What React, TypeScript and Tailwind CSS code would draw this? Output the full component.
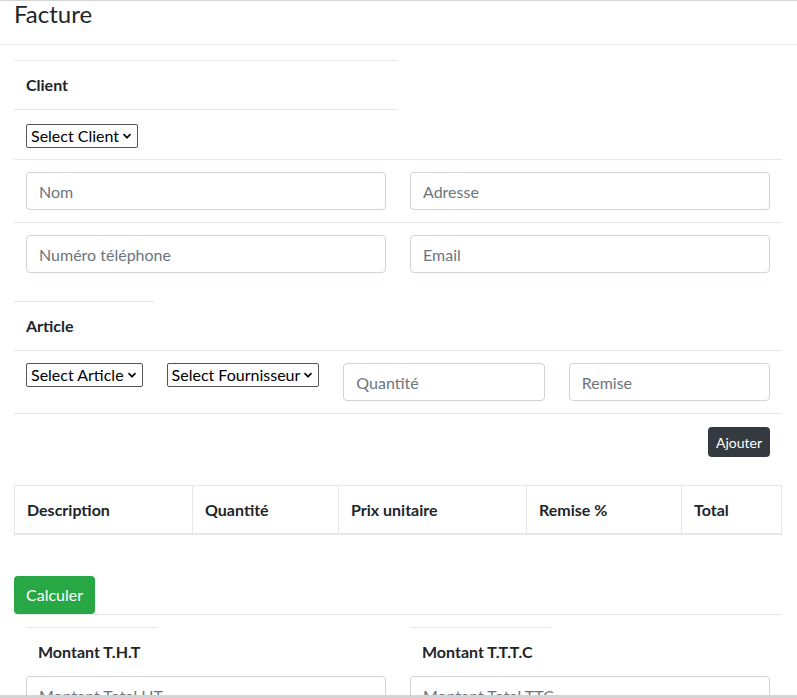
import { ReactNode } from "react";

const font = { fontFamily: "Lato, 'Liberation Sans', sans-serif" };

function Chevron() {
  return (
    <svg width="10" height="10" viewBox="0 0 10 10" className="shrink-0">
      <path d="M1.5 3.2 L5 6.7 L8.5 3.2" fill="none" stroke="#111" strokeWidth="1.8" />
    </svg>
  );
}

function FakeSelect({ label }: { label: string }) {
  return (
    <div className="inline-flex items-center gap-[3px] h-[24px] pl-[4px] pr-[5px] border border-[#555] rounded-[2px] text-[16px] text-black leading-none bg-white">
      <span>{label}</span>
      <Chevron />
    </div>
  );
}

function Input({ placeholder }: { placeholder: string }) {
  return (
    <input
      placeholder={placeholder}
      className="w-full h-[38px] px-[12px] border border-[#ced4da] rounded-[4px] text-[16px] text-[#495057] placeholder:text-[#6c757d] outline-none"
    />
  );
}

function Line({ w }: { w?: string }) {
  return <div className={`border-t border-[#e5e7eb] ${w ?? "w-full"}`} />;
}

function Heading({ children }: { children: ReactNode }) {
  return <div className="h-[48px] flex items-center px-[12px] text-[16px] font-bold text-[#212529]">{children}</div>;
}

export default function App() {
  const cols = [
    { label: "Description", w: "w-[177px]" },
    { label: "Quantité", w: "w-[146px]" },
    { label: "Prix unitaire", w: "w-[188px]" },
    { label: "Remise %", w: "w-[155px]" },
    { label: "Total", w: "flex-1" },
  ];

  return (
    <div style={font} className="w-[797px] h-[698px] overflow-hidden bg-white border-t border-[#d4d4d4] text-[#212529] relative">
      <div className="h-[44px] border-b border-[#e5e7eb] px-[14px]">
        <h3 className="text-[24px] leading-[26px] text-[#212529]">Facture</h3>
      </div>

      <div className="px-[14px] w-[796px]">
        <div className="mt-[15px]">
          <Line w="w-[384px]" />
          <Heading>Client</Heading>
          <Line w="w-[384px]" />
          <div className="h-[49px] px-[12px] pt-[14px]">
            <FakeSelect label="Select Client" />
          </div>
          <Line />
          <div className="grid grid-cols-2 gap-[24px] px-[12px] py-[12px]">
            <Input placeholder="Nom" />
            <Input placeholder="Adresse" />
          </div>
          <Line />
          <div className="grid grid-cols-2 gap-[24px] px-[12px] pt-[12px] pb-[28px]">
            <Input placeholder="Numéro téléphone" />
            <Input placeholder="Email" />
          </div>
        </div>

        <div>
          <Line w="w-[140px]" />
          <Heading>Article</Heading>
          <Line />
          <div className="flex items-start gap-[24px] px-[12px] py-[12px]">
            <FakeSelect label="Select Article" />
            <FakeSelect label="Select Fournisseur" />
            <div className="flex-1">
              <Input placeholder="Quantité" />
            </div>
            <div className="flex-1">
              <Input placeholder="Remise" />
            </div>
          </div>
          <Line />
          <div className="flex justify-end px-[12px] pt-[13px]">
            <button className="h-[30px] px-[8px] rounded-[4px] bg-[#343a40] text-white text-[14px]">Ajouter</button>
          </div>
        </div>

        <div className="mt-[28px] flex border border-[#e5e7eb] border-b-2 w-[768px]">
          {cols.map((c, i) => (
            <div
              key={c.label}
              className={`${c.w} h-[47px] flex items-center px-[12px] text-[16px] font-bold text-[#212529] ${i > 0 ? "border-l border-[#e5e7eb]" : ""}`}
            >
              {c.label}
            </div>
          ))}
        </div>

        <div className="mt-[41px]">
          <button className="h-[38px] px-[12px] rounded-[4px] bg-[#28a745] text-white text-[16px]">Calculer</button>
          <Line />
        </div>

        <div className="grid grid-cols-2 gap-[24px] px-[12px] pt-[12px]">
          <div>
            <Line w="w-[132px]" />
            <div className="h-[48px] flex items-center px-[12px] text-[16px] font-bold">Montant T.H.T</div>
            <Input placeholder="Montant Total HT" />
          </div>
          <div>
            <Line w="w-[141px]" />
            <div className="h-[48px] flex items-center px-[12px] text-[16px] font-bold">Montant T.T.T.C</div>
            <Input placeholder="Montant Total TTC" />
          </div>
        </div>
      </div>

      <div className="absolute left-0 right-0 bottom-0 h-[3px] bg-[#d4d4d4]" />
    </div>
  );
}
